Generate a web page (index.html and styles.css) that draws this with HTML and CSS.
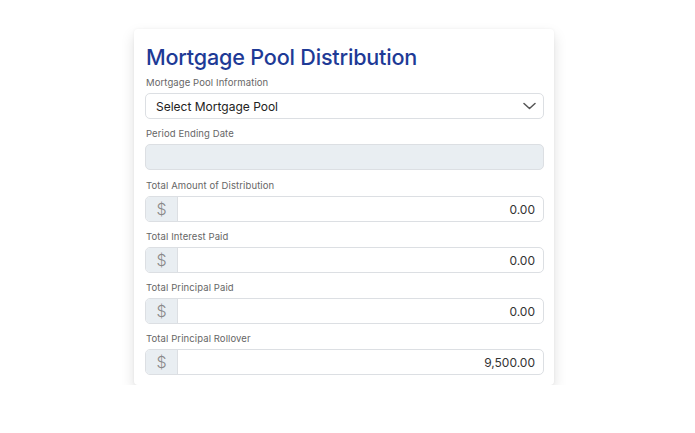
FILE: index.html
```html
<!DOCTYPE html>
<html>
<head>
<meta charset="utf-8">
<link rel="stylesheet" href="styles.css">
</head>
<body>
<div class="card">
  <h1 class="title">Mortgage Pool Distribution</h1>
  <div class="group">
    <div class="label">Mortgage Pool Information</div>
    <div class="select">
      <span>Select Mortgage Pool</span>
      <svg class="chev" width="13" height="8" viewBox="0 0 13 8"><path d="M1 1.5 L6.5 6.5 L12 1.5" fill="none" stroke="#555" stroke-width="1.5" stroke-linecap="round" stroke-linejoin="round"/></svg>
    </div>
  </div>
  <div class="group second">
    <div class="label">Period Ending Date</div>
    <div class="input disabled"></div>
  </div>
  <div class="group">
    <div class="label">Total Amount of Distribution</div>
    <div class="igroup"><div class="addon">$</div><div class="field">0.00</div></div>
  </div>
  <div class="group">
    <div class="label">Total Interest Paid</div>
    <div class="igroup"><div class="addon">$</div><div class="field">0.00</div></div>
  </div>
  <div class="group">
    <div class="label">Total Principal Paid</div>
    <div class="igroup"><div class="addon">$</div><div class="field">0.00</div></div>
  </div>
  <div class="group last">
    <div class="label">Total Principal Rollover</div>
    <div class="igroup"><div class="addon">$</div><div class="field">9,500.00</div></div>
  </div>
</div>
</body>
</html>
```
FILE: styles.css
```css
html, body { margin: 0; padding: 0; background: #fff; }
body {
  font-family: "Inter", "Noto Sans", sans-serif;
  padding: 29px 0 0 134px;
}
.card {
  width: 399px;
  padding: 11px 10px 10px 11px;
  background: #fff;
  border-radius: 4px;
  box-shadow: 0 6px 14px rgba(0,0,0,0.13), 0 0 3px rgba(0,0,0,0.05);
}
.title {
  margin: 0 0 2px 1px;
  font-size: 21.6px;
  line-height: 34px;
  font-weight: 500;
  color: #1e3a96;
  letter-spacing: -0.2px;
}
.group { margin-bottom: 8px; }
.group.second { margin-bottom: 9px; }
.group.last { margin-bottom: 0; }
.label {
  font-size: 9.5px;
  line-height: 14px;
  color: #666;
  margin: 0 0 3px 1px;
  letter-spacing: 0.1px;
}
.select, .input, .igroup {
  box-sizing: border-box;
  height: 26px;
  border: 1px solid #dcdfe3;
  border-radius: 5px;
  background: #fff;
}
.select {
  display: flex;
  align-items: center;
  justify-content: space-between;
  padding: 0 7px 0 10px;
  font-size: 12px;
  color: #222;
}
.input.disabled { background: #e9eef2; }
.igroup { display: flex; overflow: hidden; }
.addon {
  width: 31px;
  flex: none;
  background: #e9eef2;
  border-right: 1px solid #dcdfe3;
  display: flex;
  align-items: center;
  justify-content: center;
  font-size: 16px;
  font-weight: 300;
  color: #888;
}
.field {
  flex: 1;
  display: flex;
  align-items: center;
  justify-content: flex-end;
  padding-right: 8px;
  font-size: 12px;
  color: #333;
}
```
